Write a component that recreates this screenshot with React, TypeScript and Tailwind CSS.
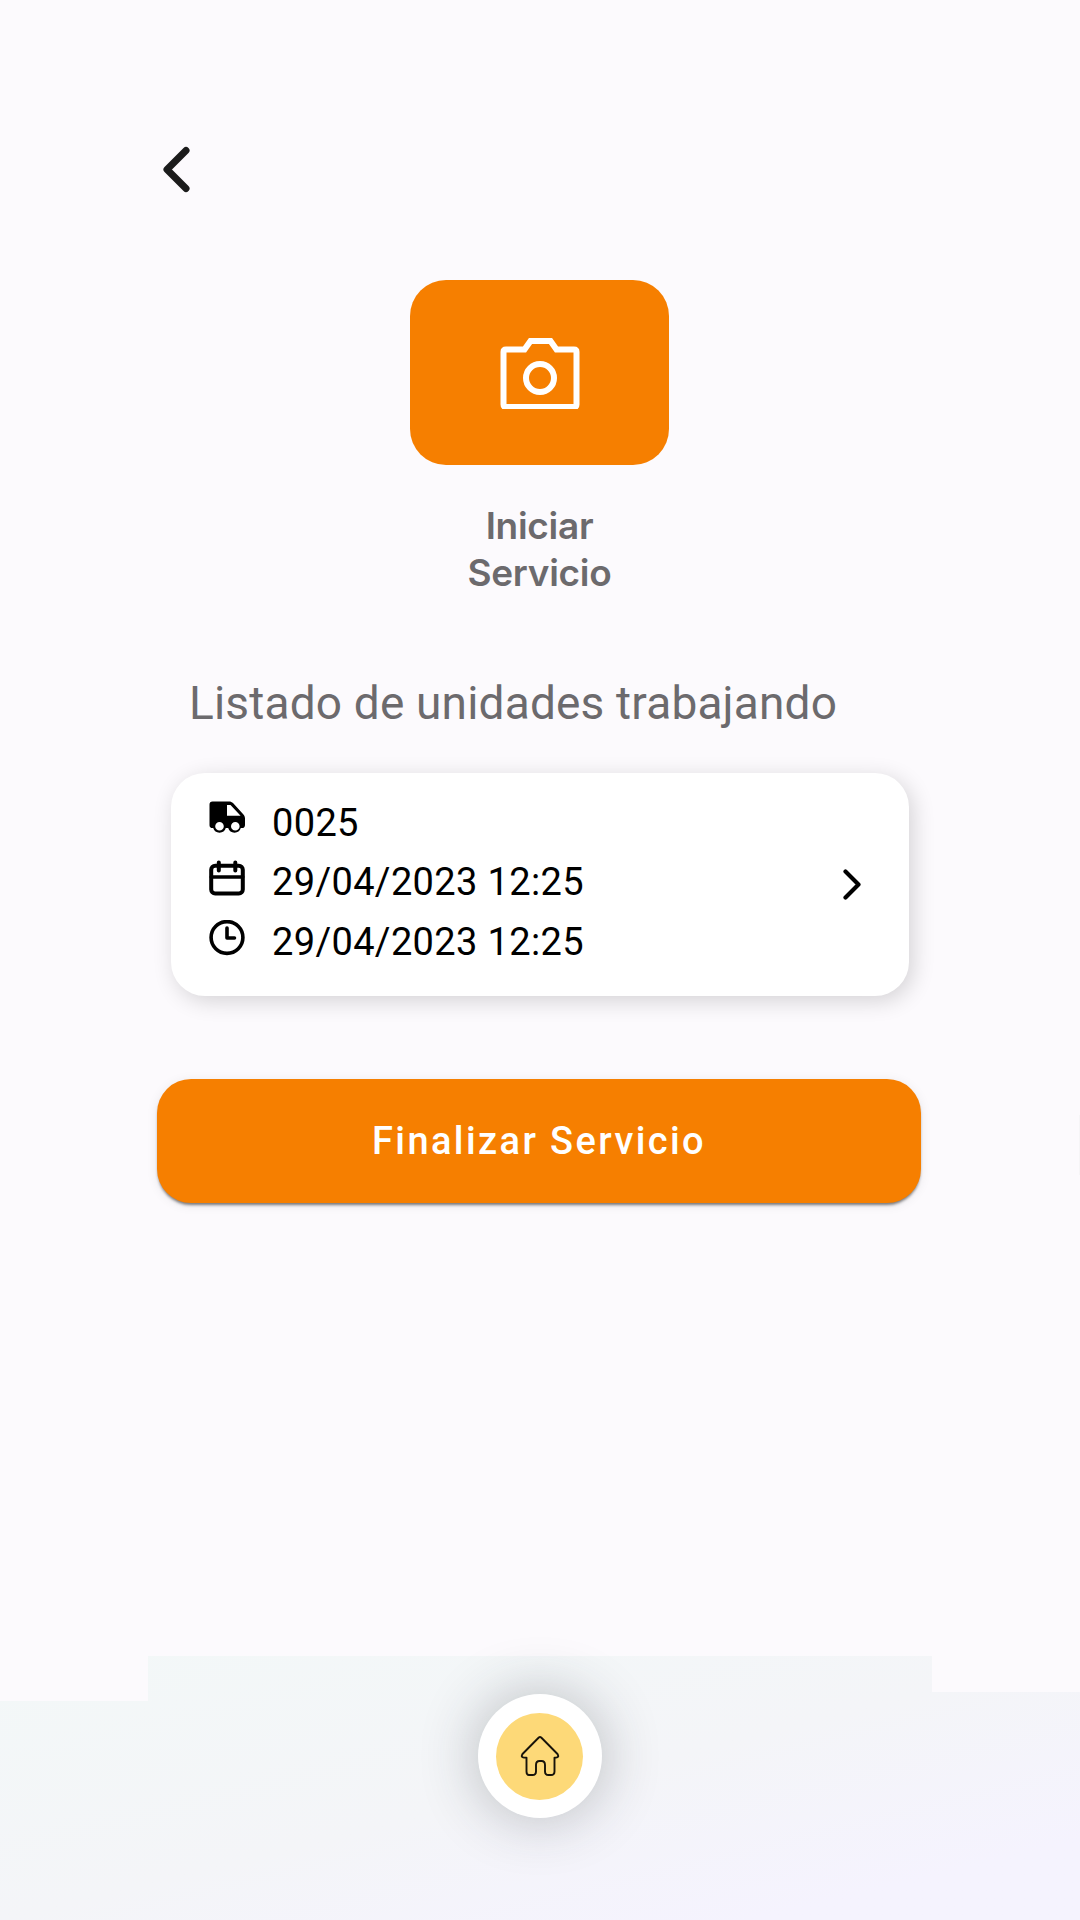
import React from "react";

function TruckIcon() {
  return (
    <svg className="block h-[36px] w-[36px]" viewBox="0 0 36 36">
      <path
        fillRule="evenodd"
        d="M3.5.5H20c1.600 0 3 .6 4 1.600L34 13c1.200 1.200 2 2.700 2 4.400V24c0 1.900-1.100 3.100-3 3.100h-1.200a6.600 6.600 0 0 1-12.600 0h-2.400a6.600 6.600 0 0 1-12.600 0H3.500C1.600 27.100.5 26 .5 24.200V3.500C.5 1.600 1.600.5 3.500.5ZM18 4v10.800h13.600L21.500 4ZM10.500 21a4.300 4.300 0 1 0 0 8.600 4.300 4.300 0 0 0 0-8.600Zm15.800 0a4.300 4.300 0 1 0 0 8.600 4.300 4.300 0 0 0 0-8.600Z"
      />
    </svg>
  );
}

function CalendarIcon() {
  return (
    <svg className="block h-[36px] w-[36px]" viewBox="0 0 36 36" fill="none" stroke="#000" strokeWidth="4" strokeLinecap="round">
      <rect x="2.200" y="5.800" width="31.600" height="27.800" rx="4" />
      <path d="M2.200 17h31.600" strokeWidth="3.400" />
      <path d="M9.800 2.600v8M26.300 2.600v8" />
    </svg>
  );
}

function ClockIcon() {
  return (
    <svg className="block h-[36px] w-[36px]" viewBox="0 0 36 36" fill="none" stroke="#000" strokeWidth="3.600" strokeLinecap="round" strokeLinejoin="round">
      <circle cx="18" cy="17.500" r="15.900" />
      <path d="M18 8v10h7.500" />
    </svg>
  );
}

const rows = [
  { icon: <TruckIcon />, text: "0025" },
  { icon: <CalendarIcon />, text: "29/04/2023 12:25" },
  { icon: <ClockIcon />, text: "29/04/2023 12:25" },
];

export default function App() {
  return (
    <main className="flex h-[1920px] w-[1080px] flex-col overflow-hidden bg-[#fcfafd] font-['Roboto',sans-serif]">
      <header className="h-[280px] pt-[143px] pl-[159px]">
        <button aria-label="Volver" className="block">
          <svg className="block h-[52px] w-[34px]" viewBox="0 0 34 52" fill="none" stroke="#1b1b1b" strokeWidth="7" strokeLinecap="round" strokeLinejoin="round">
            <path d="M27 7.500 8 26.500 27 45.500" />
          </svg>
        </button>
      </header>

      <section className="flex h-[390px] w-[1079px] flex-col items-center">
        <button aria-label="Iniciar servicio" className="flex h-[185px] w-[259px] items-center justify-center rounded-[36px] bg-[#f67f00]">
          <svg className="block h-[72px] w-[80px]" viewBox="0 0 80 72" fill="none" stroke="#fff" strokeWidth="6">
            <path d="M6 12.500h18.500L30.500 4h20l6 8.500H74q2.500 0 2.500 2.500v52.500Q76.500 70 74 70H6q-2.500 0-2.500-2.500V15q0-2.500 2.500-2.500Z" />
            <circle cx="40" cy="41" r="14" />
          </svg>
        </button>
        <h1 className="mt-[37px] text-center font-['Inter',sans-serif] text-[37px] leading-[47px] font-semibold tracking-[-0.3px] text-[#6c6a6d]">
          Iniciar
          <br />
          Servicio
        </h1>
      </section>

      <section className="h-[409px]">
        <h2 className="h-[103px] pt-[6px] pl-[189px] text-[46px] leading-[54px] tracking-[0.180px] whitespace-nowrap text-[#6c6a6d]">
          Listado de unidades trabajando
        </h2>
        <div className="ml-[171px] flex h-[223px] w-[738px] items-center justify-between rounded-[34px] bg-white pr-[47px] pl-[38px] shadow-[4px_5px_22px_rgba(0,0,0,0.16)]">
          <ul className="-mt-[5px]">
            {rows.map((row, i) => (
              <li key={i} className="flex h-[59.500px] items-center gap-[27px]">
                <span className="-mt-[8px]">{row.icon}</span>
                <span className="text-[38px] leading-[44px] tracking-[0.350px] whitespace-nowrap text-black">{row.text}</span>
              </li>
            ))}
          </ul>
          <svg className="block h-[32px] w-[20px]" viewBox="0 0 20 32" fill="none" stroke="#000" strokeWidth="4.200" strokeLinecap="round" strokeLinejoin="round">
            <path d="M3.500 2.500 16.500 15.500 3.500 28.500" />
          </svg>
        </div>
      </section>

      <section className="flex h-[577px] items-start justify-between pl-[157px]">
        <button className="flex h-[124px] w-[764px] items-center justify-center rounded-[34px] bg-[#f67f00] text-[38px] font-medium tracking-[2.400px] whitespace-nowrap text-white shadow-[0_3px_3px_-1px_rgba(0,0,0,0.5),0_2px_12px_rgba(0,0,0,0.08)]">
          Finalizar Servicio
        </button>
        <div className="mt-[36px] h-[60px] w-px bg-[#f6f5f7] shadow-[0_0_14px_rgba(0,0,0,0.06)]" />
      </section>

      <nav className="flex h-[264px] items-start bg-linear-to-br from-[#f3f8f8] via-[#f4f5f8] to-[#f5f3fe] to-85%">
        <div className="h-[45px] w-[148px] bg-[#fcfafd]" />
        <div className="flex w-[784px] justify-center pt-[38px]">
          <button aria-label="Inicio" className="flex h-[124px] w-[124px] items-center justify-center rounded-full bg-white pr-[1px] shadow-[0_0_58px_rgba(40,45,55,0.3)]">
            <span className="flex h-[87px] w-[87px] items-center justify-center rounded-full bg-[#fdd978]">
              <svg className="block h-[40px] w-[40px]" viewBox="0 0 40 40" fill="none" stroke="#17130a" strokeWidth="1.900" strokeLinejoin="round">
                <path d="M18.800 1.500Q20 .5 21.200 1.500L37.500 18q2 3.500-1.500 3.600h-1.500V35.500q0 3.500-3.500 3.500h-2.500q-3.500 0-3.500-3.500v-6.500q0-4-3.500-4h-2q-3.500 0-3.500 4v6.500q0 3.500-3.500 3.500H9Q6.500 39 6.500 35.500V21.600H4q-3.500-.1-1.500-3.600Z" />
              </svg>
            </span>
          </button>
        </div>
        <div className="h-[36px] w-[148px] bg-[#fcfafd]" />
      </nav>
    </main>
  );
}
